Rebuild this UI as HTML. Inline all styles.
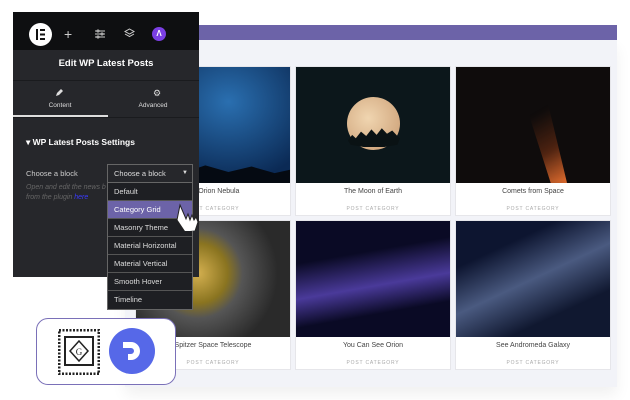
<!DOCTYPE html>
<html><head><meta charset="utf-8"><style>
*{margin:0;padding:0;box-sizing:border-box}
body{width:630px;height:400px;background:#fff;position:relative;overflow:hidden;font-family:"Liberation Sans",sans-serif}
.abs{position:absolute}
.panel{left:125px;top:40px;width:492px;height:347px;background:#f2f3f8;box-shadow:0 8px 14px rgba(0,0,0,.06)}
.bar{left:190px;top:25px;width:427px;height:15px;background:#6c63a8}
.card{position:absolute;width:156px;height:150px;background:#fff;border:1px solid #e6e6ea}
.card .img{height:116px;width:100%;position:relative;overflow:hidden}
.card .t{font-size:7px;color:#444;text-align:center;margin-top:5px}
.card .c{font-size:5px;color:#aaa;text-align:center;margin-top:11px;letter-spacing:.8px}
.ed{left:13px;top:12px;width:186px;height:265px;background:#26272b}
.top{left:13px;top:12px;width:186px;height:38px;background:#0e0f11}
.dd{left:107px;top:164px;width:86px;border:1px solid #666;background:#1e1f23}
.dd div{height:18px;border-bottom:1px solid #555;color:#ddd;font-size:7.5px;line-height:17px;padding-left:6px}
</style></head><body>
<div class="abs panel"></div>
<div class="abs bar"></div>
<div class="card" style="left:135px;top:66px"><div class="img" style="background:radial-gradient(ellipse at 60% 30%,#2a6fb0,#0b2a55 70%),#0b2a55"><div class="abs" style="left:0;bottom:0;width:100%;height:22px;background:#050a12;clip-path:polygon(0 60%,15% 30%,30% 55%,45% 20%,60% 50%,75% 25%,90% 55%,100% 40%,100% 100%,0 100%)"></div></div><div class="t">the Orion Nebula</div><div class="c">POST CATEGORY</div></div>
<div class="card" style="left:295px;top:66px"><div class="img" style="background:#0c171b"><div class="abs" style="left:51px;top:30px;width:53px;height:53px;border-radius:50%;background:radial-gradient(circle at 40% 40%,#f0d5b0,#c89a70)"></div><div class="abs" style="left:52px;top:58px;width:52px;height:22px;background:#0a1214;clip-path:polygon(0 70%,8% 45%,15% 60%,25% 30%,35% 50%,45% 20%,55% 45%,65% 15%,75% 40%,85% 25%,95% 50%,100% 60%,95% 90%,70% 100%,30% 100%,5% 90%)"></div></div><div class="t">The Moon of Earth</div><div class="c">POST CATEGORY</div></div>
<div class="card" style="left:455px;top:66px"><div class="img" style="background:#0f0c0c"><div class="abs" style="left:40px;top:20px;width:80px;height:100px;background:linear-gradient(150deg,transparent 35%,rgba(120,50,20,.6) 65%,#e87030 95%);clip-path:polygon(30% 0,60% 0,90% 100%,70% 100%);filter:blur(3px)"></div></div><div class="t">Comets from Space</div><div class="c">POST CATEGORY</div></div>
<div class="card" style="left:135px;top:220px"><div class="img" style="background:radial-gradient(circle at 40% 45%,#d4b050 0,#8a7420 30px,#555 45px,#2a2a2a 80px)"></div><div class="t">Spitzer Space Telescope</div><div class="c">POST CATEGORY</div></div>
<div class="card" style="left:295px;top:220px"><div class="img" style="background:linear-gradient(170deg,#0a0a25 30%,#4a3a9a 55%,#0a0a25 75%)"></div><div class="t">You Can See Orion</div><div class="c">POST CATEGORY</div></div>
<div class="card" style="left:455px;top:220px"><div class="img" style="background:linear-gradient(155deg,#0d1530 25%,#4a5a80 50%,#101830 75%)"></div><div class="t">See Andromeda Galaxy</div><div class="c">POST CATEGORY</div></div>

<div class="abs ed"></div>
<div class="abs top"></div>
<div class="abs" style="left:29px;top:23px;width:23px;height:23px;border-radius:50%;background:#fff"></div>
<div class="abs" style="left:36px;top:29px;width:2px;height:11px;background:#111"></div>
<div class="abs" style="left:40px;top:29px;width:5px;height:2px;background:#111;box-shadow:0 4.5px #111,0 9px #111"></div>
<div class="abs" style="left:64px;top:26px;color:#ccc;font-size:14px">+</div>
<svg class="abs" style="left:95px;top:29px" width="10" height="10" stroke="#ccc" stroke-width="1"><path d="M0 2h10M0 5h10M0 8h10"/><circle cx="3" cy="2" r="1" fill="#111"/><circle cx="7" cy="5" r="1" fill="#111"/><circle cx="3" cy="8" r="1" fill="#111"/></svg>
<svg class="abs" style="left:124px;top:28px" width="11" height="11" stroke="#ccc" stroke-width="1" fill="none"><path d="M5.5 1l4.5 2.5-4.5 2.5-4.5-2.5z M1 6l4.5 2.5 4.5-2.5"/></svg>
<div class="abs" style="left:152px;top:27px;width:14px;height:14px;border-radius:50%;background:#7b3fe4;color:#fff;font-size:8px;text-align:center;line-height:14px;font-weight:bold">Λ</div>
<div class="abs" style="left:13px;top:58px;width:186px;text-align:center;color:#fff;font-size:9.5px;font-weight:bold">Edit WP Latest Posts</div>
<div class="abs" style="left:13px;top:80px;width:186px;height:1px;background:#1a1b1e"></div>
<svg class="abs" style="left:55px;top:89px" width="8" height="8"><path d="M1 7l1-3 4-4 2 2-4 4z" fill="#ddd"/></svg>
<div class="abs" style="left:13px;top:102px;width:94px;text-align:center;color:#ddd;font-size:6.5px">Content</div>
<div class="abs" style="left:153px;top:89px;color:#ddd;font-size:9px;line-height:9px">⚙</div>
<div class="abs" style="left:107px;top:102px;width:92px;text-align:center;color:#ddd;font-size:6.5px">Advanced</div>
<div class="abs" style="left:13px;top:115px;width:95px;height:2px;background:#ddd"></div>
<div class="abs" style="left:13px;top:117px;width:186px;height:1px;background:#1a1b1e"></div>
<div class="abs" style="left:26px;top:137px;color:#fff;font-size:8.5px;font-weight:bold">▾ WP Latest Posts Settings</div>
<div class="abs" style="left:26px;top:169px;color:#ccc;font-size:7.5px">Choose a block</div>
<div class="abs" style="left:26px;top:183px;color:#666;font-size:7px;font-style:italic;line-height:10px">Open and edit the news b<br>from the plugin <span style="color:#3a3aff">here</span></div>
<div class="abs dd">
<div style="background:#26272b;border-bottom:1px solid #666">Choose a block <span style="float:right;margin-right:4px;font-size:6px">▼</span></div>
<div>Default</div>
<div style="background:#6c63a8;color:#fff">Category Grid</div>
<div>Masonry Theme</div>
<div>Material Horizontal</div>
<div>Material Vertical</div>
<div>Smooth Hover</div>
<div style="border-bottom:0">Timeline</div>
</div>
<svg class="abs" style="left:176px;top:201px" width="26" height="30"><path d="M4 4l6 14 2-5 2 6 2-5 2 5 2-3 2 5-3 9-10 1-8-12z" fill="#fff" stroke="#222" stroke-width="1"/></svg>

<div class="abs" style="left:36px;top:318px;width:140px;height:67px;border:1.5px solid #7a70b8;border-radius:12px;background:#fff"></div>
<svg class="abs" style="left:58px;top:329px" width="42" height="46"><rect x="1" y="1" width="40" height="44" fill="#fff" stroke="#222" stroke-width="3" stroke-dasharray="2 1.5"/><rect x="7" y="8" width="28" height="28" fill="none" stroke="#222" stroke-width="2"/><path d="M21 12l9 10-9 10-9-10z" fill="#fff" stroke="#222" stroke-width="1.5"/><text x="21" y="26" font-size="9" text-anchor="middle" fill="#222" font-family="Liberation Serif">G</text></svg>
<div class="abs" style="left:109px;top:328px;width:46px;height:46px;border-radius:50%;background:#5668e8"></div>
<svg class="abs" style="left:120px;top:339px" width="24" height="24"><path d="M3 3h8a9 9 0 0 1 0 18H8v-6h3a3 3 0 0 0 0-6H3z" fill="#fff"/></svg>
</body></html>
